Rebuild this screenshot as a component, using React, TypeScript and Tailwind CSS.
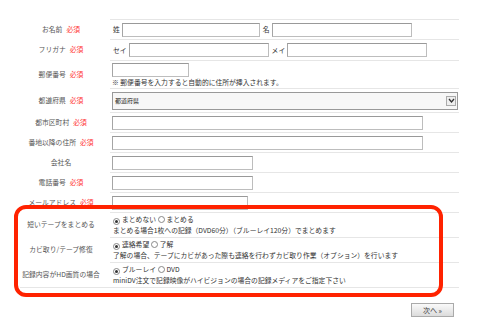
import React from "react";

const font = { fontFamily: '"Noto Sans CJK JP", "Noto Sans", sans-serif' };

function Req() {
  return <span className="ml-[4px] text-[#ff3333]">必須</span>;
}

function Input({ w }: { w: string }) {
  return (
    <span
      className={`inline-block h-[14px] ${w} border border-[#bdbdbd] border-t-[#999] border-l-[#a5a5a5] bg-white`}
    />
  );
}

function Radio({ on }: { on?: boolean }) {
  return (
    <span className="inline-flex items-center justify-center w-[7px] h-[7px] rounded-full border border-[#888] bg-white mr-[2px] align-[-1px]">
      {on && <span className="block w-[3px] h-[3px] rounded-full bg-[#333]" />}
    </span>
  );
}

function Row({
  label,
  req,
  h,
  children,
}: {
  label: string;
  req?: boolean;
  h: string;
  children: React.ReactNode;
}) {
  return (
    <div className={`flex ${h}`}>
      <div className="w-[98px] shrink-0 flex items-center justify-center text-[#555]">
        {label}
        {req && <Req />}
      </div>
      <div className="flex-1 border-t border-[#e6e6e6] pl-[2px] flex flex-col justify-center">
        {children}
      </div>
    </div>
  );
}

export default function App() {
  return (
    <div
      className="relative w-[480px] h-[320px] bg-white text-[6.8px] leading-[11px] text-[#333] overflow-hidden"
      style={font}
    >
      <div className="pt-[19px] pl-[12px] w-[459px]">
        <Row label="お名前" req h="h-[20px]">
          <div className="flex items-center gap-[2px]">
            <span className="pl-[1px]">姓</span>
            <Input w="w-[138px]" />
            <span className="ml-[1px]">名</span>
            <Input w="w-[140px]" />
          </div>
        </Row>
        <Row label="フリガナ" req h="h-[21px]">
          <div className="flex items-center gap-[2px]">
            <span className="pl-[1px]">セイ</span>
            <Input w="w-[140px]" />
            <span className="ml-[1px]">メイ</span>
            <Input w="w-[140px]" />
          </div>
        </Row>
        <Row label="郵便番号" req h="h-[28px]">
          <div className="flex flex-col">
            <Input w="w-[77px]" />
            <span className="leading-[10px]">※ 郵便番号を入力すると自動的に住所が挿入されます。</span>
          </div>
        </Row>
        <Row label="都道府県" req h="h-[24px]">
          <div className="flex items-center h-[18px] w-[346px] border border-[#999] bg-[#f7f7f7] pl-[2px] pr-[1px]">
            <span className="flex-1 text-[6px] text-[#222]">都道府県</span>
            <span className="flex items-center justify-center w-[10px] h-[10px] border border-[#aaa] bg-[#eee]">
              <svg width="7" height="5" viewBox="0 0 7 5">
                <path d="M1 1 L3.5 4 L6 1" stroke="#333" strokeWidth="1.3" fill="none" />
              </svg>
            </span>
          </div>
        </Row>
        <Row label="都市区町村" req h="h-[20px]">
          <Input w="w-[311px]" />
        </Row>
        <Row label="番地以降の住所" req h="h-[20px]">
          <Input w="w-[311px]" />
        </Row>
        <Row label="会社名" h="h-[20px]">
          <Input w="w-[141px]" />
        </Row>
        <Row label="電話番号" req h="h-[20px]">
          <Input w="w-[141px]" />
        </Row>
        <Row label="メールアドレス" req h="h-[20px]">
          <Input w="w-[136px]" />
        </Row>
        <Row label="短いテープをまとめる" h="h-[25px]">
          <div className="pl-[1px]">
            <Radio on />まとめない <Radio />まとめる
          </div>
          <div className="pl-[1px]">まとめる場合1枚への記録（DVD60分）（ブルーレイ120分）でまとめます</div>
        </Row>
        <Row label="カビ取り/テープ修復" h="h-[25px]">
          <div className="pl-[1px]">
            <Radio on />連絡希望 <Radio />了解
          </div>
          <div className="pl-[1px]">了解の場合、テープにカビがあった際も連絡を行わずカビ取り作業（オプション）を行います</div>
        </Row>
        <Row label="記録内容がHD画質の場合" h="h-[25px]">
          <div className="pl-[1px]">
            <Radio on />ブルーレイ <Radio />DVD
          </div>
          <div className="pl-[1px]">miniDV注文で記録映像がハイビジョンの場合の記録メディアをご指定下さい</div>
        </Row>
        <div className="ml-[8px] border-t border-[#e6e6e6]" />
        <div className="flex justify-end pt-[15px] pr-[5px]">
          <button className="h-[14px] w-[43px] border border-[#aaa] bg-gradient-to-b from-[#fafafa] to-[#dcdcdc] text-[7px] leading-[12px] text-[#333]">
            次へ »
          </button>
        </div>
      </div>
      <div className="absolute left-[14px] top-[205px] w-[429px] h-[92px] border-[4px] border-[#ff2200] rounded-[12px]" />
    </div>
  );
}
